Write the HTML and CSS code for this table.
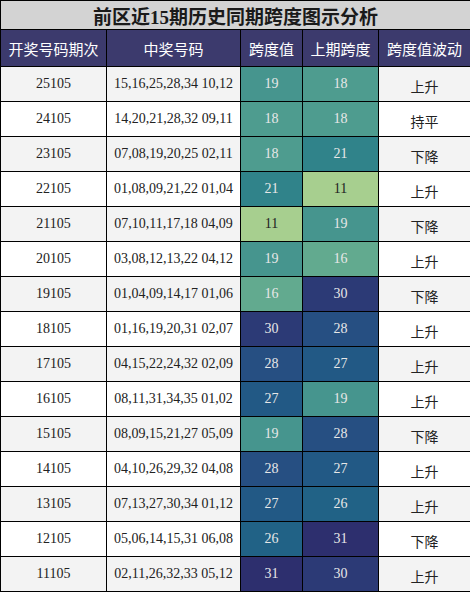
FILE: index.html
```html
<!DOCTYPE html>
<html lang="zh-CN">
<head>
    <meta charset="UTF-8">
    <meta name="viewport" content="width=device-width, initial-scale=1.0">
    <title>前区近15期历史同期跨度图示分析</title>
    <link rel="stylesheet" href="styles.css">
</head>
<body>

    <table class="span-table">
        <colgroup>
            <col class="col-issue">
            <col class="col-nums">
            <col class="col-span">
            <col class="col-prev">
            <col class="col-trend">
        </colgroup>
        <thead>
            <tr class="title-row">
                <th colspan="5">前区近15期历史同期跨度图示分析</th>
            </tr>
            <tr class="head-row">
                <th>开奖号码期次</th>
                <th>中奖号码</th>
                <th>跨度值</th>
                <th>上期跨度</th>
                <th>跨度值波动</th>
            </tr>
        </thead>
        <tbody>
            <tr><td>25105</td><td>15,16,25,28,34 10,12</td><td class="heat v19">19</td><td class="heat v18">18</td><td class="trend">上升</td></tr>
            <tr><td>24105</td><td>14,20,21,28,32 09,11</td><td class="heat v18">18</td><td class="heat v18">18</td><td class="trend">持平</td></tr>
            <tr><td>23105</td><td>07,08,19,20,25 02,11</td><td class="heat v18">18</td><td class="heat v21">21</td><td class="trend">下降</td></tr>
            <tr><td>22105</td><td>01,08,09,21,22 01,04</td><td class="heat v21">21</td><td class="heat v11">11</td><td class="trend">上升</td></tr>
            <tr><td>21105</td><td>07,10,11,17,18 04,09</td><td class="heat v11">11</td><td class="heat v19">19</td><td class="trend">下降</td></tr>
            <tr><td>20105</td><td>03,08,12,13,22 04,12</td><td class="heat v19">19</td><td class="heat v16">16</td><td class="trend">上升</td></tr>
            <tr><td>19105</td><td>01,04,09,14,17 01,06</td><td class="heat v16">16</td><td class="heat v30">30</td><td class="trend">下降</td></tr>
            <tr><td>18105</td><td>01,16,19,20,31 02,07</td><td class="heat v30">30</td><td class="heat v28">28</td><td class="trend">上升</td></tr>
            <tr><td>17105</td><td>04,15,22,24,32 02,09</td><td class="heat v28">28</td><td class="heat v27">27</td><td class="trend">上升</td></tr>
            <tr><td>16105</td><td>08,11,31,34,35 01,02</td><td class="heat v27">27</td><td class="heat v19">19</td><td class="trend">上升</td></tr>
            <tr><td>15105</td><td>08,09,15,21,27 05,09</td><td class="heat v19">19</td><td class="heat v28">28</td><td class="trend">下降</td></tr>
            <tr><td>14105</td><td>04,10,26,29,32 04,08</td><td class="heat v28">28</td><td class="heat v27">27</td><td class="trend">上升</td></tr>
            <tr><td>13105</td><td>07,13,27,30,34 01,12</td><td class="heat v27">27</td><td class="heat v26">26</td><td class="trend">上升</td></tr>
            <tr><td>12105</td><td>05,06,14,15,31 06,08</td><td class="heat v26">26</td><td class="heat v31">31</td><td class="trend">下降</td></tr>
            <tr><td>11105</td><td>02,11,26,32,33 05,12</td><td class="heat v31">31</td><td class="heat v30">30</td><td class="trend">上升</td></tr>
        </tbody>
    </table>

</body>
</html>
```

FILE: styles.css
```css
body {
    margin: 0;
    background-color: #ffffff;
    font-family: 'Liberation Serif', 'Noto Sans CJK SC', serif;
}
.span-table {
    width: 470px;
    border-collapse: collapse;
    table-layout: fixed;
}
.col-issue { width: 106px; }
.col-nums { width: 134px; }
.col-span { width: 62px; }
.col-prev { width: 76px; }
.col-trend { width: 92px; }
.span-table th,
.span-table td {
    border: 1px solid #000000;
    padding: 0;
    text-align: center;
    white-space: nowrap;
}
.title-row th {
    height: 28px;
    background-color: #d3d3d3;
    color: #1a1a1a;
    font-size: 19px;
    font-weight: bold;
}
.head-row th {
    height: 36px;
    background-color: #3c3a6d; /* dark navy header */
    color: #ffffff;
    font-family: 'Noto Sans CJK SC', sans-serif;
    font-size: 15px;
    font-weight: normal;
}
.span-table td {
    height: 34px;
    font-size: 14px;
    color: #222222;
}
.span-table tbody tr:nth-child(odd) {
    background-color: #f3f3f3;
}
.span-table tbody tr:nth-child(even) {
    background-color: #ffffff;
}
.span-table td.trend {
    height: 31px;
    padding-top: 3px;
    font-family: 'Noto Sans CJK SC', sans-serif;
}
/* heat colours for the span values */
.span-table td.heat { color: #e8e8e8; }
.span-table td.v11 { background-color: #a7cf8f; color: #222222; }
.v16 { background-color: #62aa8f; }
.v18 { background-color: #4e9c8f; }
.v19 { background-color: #46958e; }
.v21 { background-color: #30838a; }
.v26 { background-color: #216286; }
.v27 { background-color: #225985; }
.v28 { background-color: #264f82; }
.v30 { background-color: #2c3a76; }
.v31 { background-color: #2d2f6e; }
```
